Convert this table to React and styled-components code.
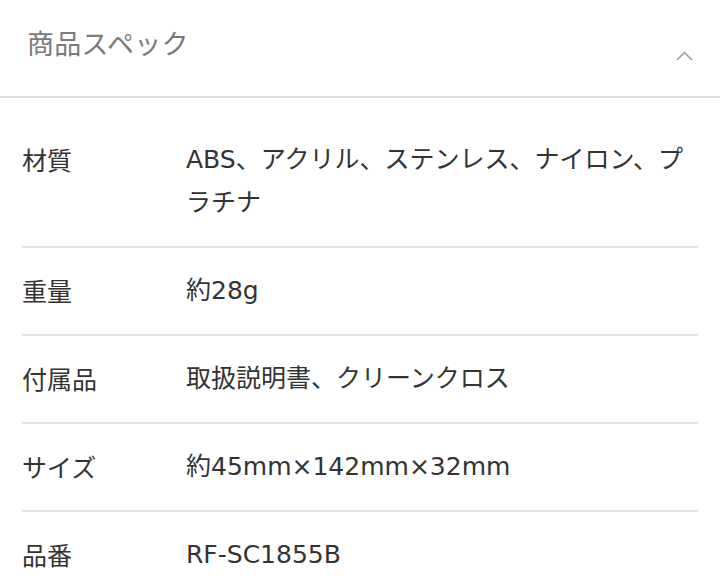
import React from "react";
import styled, { createGlobalStyle } from "styled-components";

const Global = createGlobalStyle`
  html, body { margin: 0; padding: 0; background: #fff; }
  body { font-family: "DejaVu Sans", "Noto Sans CJK JP", sans-serif; }
`;

const Section = styled.section`
  width: 720px;
  background: #fff;
`;

const Header = styled.div`
  display: flex;
  justify-content: space-between;
  align-items: flex-start;
  height: 98px;
  padding: 0 26px 0 27px;
  box-sizing: border-box;
  border-bottom: 2px solid #dcdcdc;
`;

const Title = styled.h2`
  margin: 23px 0 0;
  font-family: "Noto Sans CJK JP", sans-serif;
  font-size: 27px;
  font-weight: 400;
  line-height: 40px;
  color: #7a7a7a;
  letter-spacing: 0.3px;
`;

const Chevron = styled.svg`
  margin-top: 50px;
  width: 19px;
  height: 12px;
`;

const List = styled.dl`
  margin: 0;
  padding: 18px 22px 0 22px;
  width: 720px;
  box-sizing: border-box;
`;

const Row = styled.div`
  display: grid;
  grid-template-columns: 164px 1fr;
  padding: 22px 0;
  border-top: ${(p) => (p.$first ? "none" : "2px solid #e2e2e2")};
  padding-top: ${(p) => (p.$first ? "22px" : "21px")};
`;

const Label = styled.dt`
  margin: 0;
  font-family: "Noto Sans CJK JP", sans-serif;
  font-size: 25px;
  line-height: 43px;
  color: #333;
`;

const Value = styled.dd`
  margin: 0;
  font-size: 25px;
  line-height: 43px;
  color: #333;
`;

const specs = [
  ["材質", "ABS、アクリル、ステンレス、ナイロン、プラチナ"],
  ["重量", "約28g"],
  ["付属品", "取扱説明書、クリーンクロス"],
  ["サイズ", "約45mm×142mm×32mm"],
  ["品番", "RF-SC1855B"],
];

export default function App() {
  return (
    <>
      <Global />
      <Section>
        <Header>
          <Title>商品スペック</Title>
          <Chevron viewBox="0 0 19 12">
            <polyline points="2,10 9.5,2.5 17,10" fill="none" stroke="#9a9a9a" strokeWidth="1.5" />
          </Chevron>
        </Header>
        <List>
          {specs.map(([k, v], i) => (
            <Row key={k} $first={i === 0}>
              <Label>{k}</Label>
              <Value>{v}</Value>
            </Row>
          ))}
        </List>
      </Section>
    </>
  );
}
